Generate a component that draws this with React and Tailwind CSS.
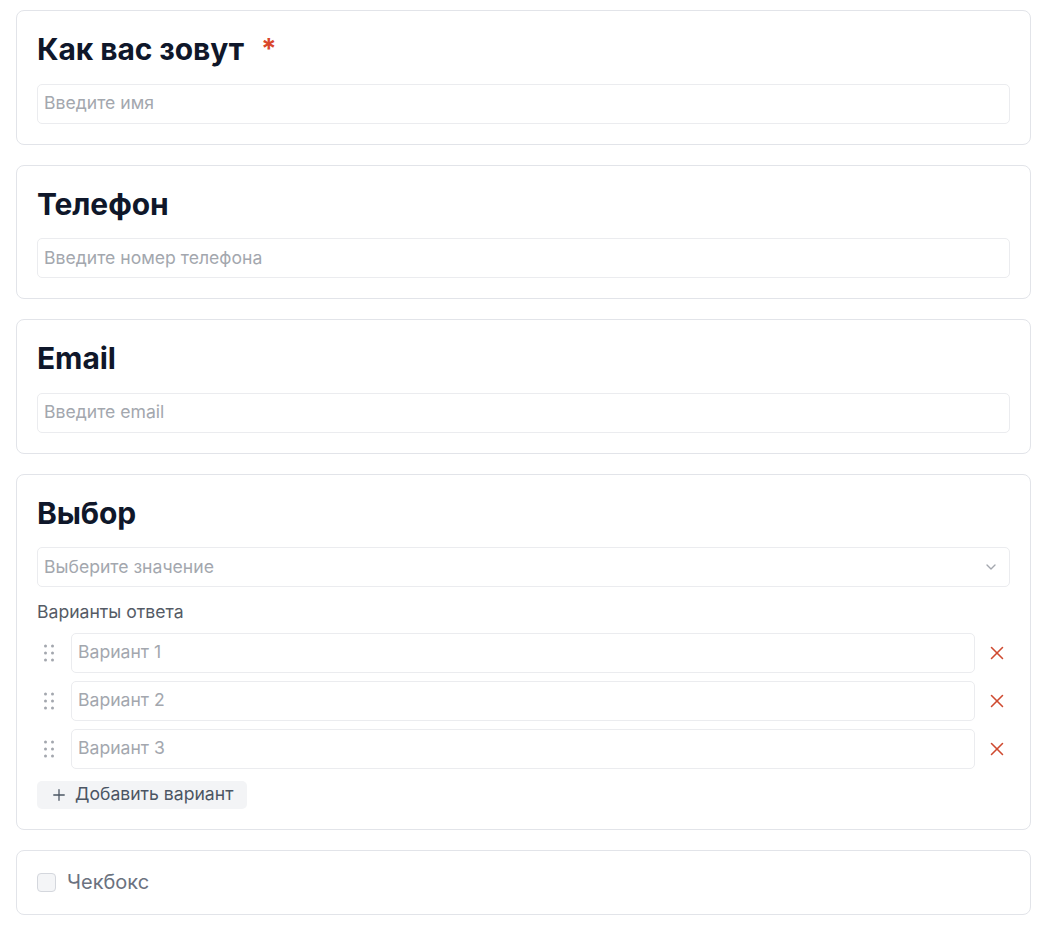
import React from "react";
import { ChevronDown, X, Plus } from "lucide-react";

function Card({ children, className = "" }) {
  return (
    <div className={"rounded-lg border border-[#e2e4e9] bg-white px-5 " + className}>
      {children}
    </div>
  );
}

function Title({ children, required }) {
  return (
    <div className="flex items-center h-[36.5px] mb-4">
      <h2 className="text-[30px] leading-[36px] font-bold text-[#0f172a] tracking-[-0.1px]">{children}</h2>
      {required && <span className="ml-[17px] text-[28px] font-bold text-[#d9472b] leading-none">*</span>}
    </div>
  );
}

function TextInput({ placeholder }) {
  return (
    <div className="h-[40px] w-full rounded-[5px] border border-[#ebecef] px-[6px] flex items-center">
      <span className="text-[17.6px] text-[#a3a7ae]">{placeholder}</span>
    </div>
  );
}

function DragHandle() {
  return (
    <svg width="10" height="18" viewBox="0 0 10 18" className="text-[#a3a7ae]">
      {[1.5, 8.5].map((x) =>
        [2, 9, 16].map((y) => <circle key={x + "-" + y} cx={x} cy={y} r="1.5" fill="currentColor" />)
      )}
    </svg>
  );
}

export default function App() {
  const options = ["Вариант 1", "Вариант 2", "Вариант 3"];

  return (
    <div className="min-h-screen bg-white px-4 pt-[10px] flex flex-col gap-5 w-[1047px]" style={{ fontFamily: "Inter, 'Noto Sans', sans-serif" }}>
      <Card className="py-5">
        <Title required>Как вас зовут</Title>
        <TextInput placeholder="Введите имя" />
      </Card>

      <Card className="py-5">
        <Title>Телефон</Title>
        <TextInput placeholder="Введите номер телефона" />
      </Card>

      <Card className="py-5">
        <Title>Email</Title>
        <TextInput placeholder="Введите email" />
      </Card>

      <Card className="py-5">
        <Title>Выбор</Title>
        <div className="h-[40px] w-full rounded-[5px] border border-[#ebecef] pl-[6px] pr-[10px] flex items-center justify-between">
          <span className="text-[17.6px] text-[#a3a7ae]">Выберите значение</span>
          <ChevronDown size={16} className="text-[#a3a7ae]" />
        </div>
        <div className="mt-[14px] text-[17.6px] leading-[22px] text-[#555b65]">Варианты ответа</div>
        <div className="mt-[9.5px] flex flex-col gap-[8px]">
          {options.map((o) => (
            <div key={o} className="flex items-center">
              <div className="w-[34px] pl-[7px] flex items-center">
                <DragHandle />
              </div>
              <div className="flex-1 h-[40px] rounded-[5px] border border-[#ebecef] px-[6px] flex items-center">
                <span className="text-[17.6px] text-[#a3a7ae]">{o}</span>
              </div>
              <div className="w-[35px] flex justify-end pr-[2px]">
                <X size={22} strokeWidth={1.7} className="text-[#cf4a30]" />
              </div>
            </div>
          ))}
        </div>
        <button className="mt-[12px] h-[28px] pl-[13px] pr-[14px] rounded-[5px] bg-[#f3f4f6] flex items-center gap-[7px] text-[17.6px] text-[#4b5563]">
          <Plus size={18} strokeWidth={1.7} />
          Добавить вариант
        </button>
      </Card>

      <Card className="py-5">
        <div className="flex items-center h-[23px]">
          <div className="w-[19px] h-[19px] rounded-[4px] border border-[#d4d7dd] bg-[#f4f5f7]" />
          <span className="ml-[11px] text-[20px] text-[#6b7280]">Чекбокс</span>
        </div>
      </Card>
    </div>
  );
}
